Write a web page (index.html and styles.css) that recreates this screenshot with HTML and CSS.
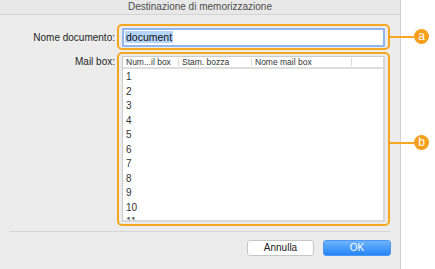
FILE: index.html
```html
<!DOCTYPE html>
<html lang="it">
<head>
<meta charset="utf-8">
<title>Destinazione di memorizzazione</title>
<link rel="stylesheet" href="styles.css">
</head>
<body>
<div class="stage">
  <div class="dialog">
    <div class="titlebar">Destinazione di memorizzazione</div>
    <div class="form">
      <div class="label label-name">Nome documento:</div>
      <div class="hl hl-name">
        <div class="field"><span class="sel">document</span></div>
      </div>
      <div class="label label-mail">Mail box:</div>
      <div class="hl hl-mail">
        <div class="table">
          <div class="thead">
            <div class="th">Num...il box</div>
            <div class="th">Stam. bozza</div>
            <div class="th">Nome mail box</div>
            <div class="th th-last"></div>
          </div>
          <div class="tbody">
            <div class="tr">1</div>
            <div class="tr">2</div>
            <div class="tr">3</div>
            <div class="tr">4</div>
            <div class="tr">5</div>
            <div class="tr">6</div>
            <div class="tr">7</div>
            <div class="tr">8</div>
            <div class="tr">9</div>
            <div class="tr">10</div>
            <div class="tr">11</div>
          </div>
        </div>
      </div>
    </div>
    <div class="sep"></div>
    <div class="buttons">
      <div class="btn btn-cancel">Annulla</div>
      <div class="btn btn-ok">OK</div>
    </div>
  </div>
  <div class="callout-line line-a"></div>
  <div class="badge badge-a">a</div>
  <div class="callout-line line-b"></div>
  <div class="badge badge-b">b</div>
</div>
</body>
</html>
```
FILE: styles.css
```css
html, body {
  margin: 0;
  padding: 0;
  background: #ffffff;
}
.stage {
  position: relative;
  width: 435px;
  height: 269px;
  overflow: hidden;
  font-family: "Liberation Sans", Arial, sans-serif;
  color: #262626;
}
.dialog {
  width: 401px;
  height: 269px;
  box-sizing: border-box;
  background: #ececec;
  border-right: 1px solid #d2d2d2;
  display: flex;
  flex-direction: column;
}
.titlebar {
  height: 15px;
  box-sizing: border-box;
  line-height: 14px;
  text-align: center;
  font-size: 10px;
  color: #4d4d4d;
  background: #e8e8e8;
  border-bottom: 1px solid #d4d4d4;
}
.form {
  display: grid;
  grid-template-columns: 117px 273px;
  row-gap: 2px;
  margin-top: 9px;
}
.label {
  font-size: 10px;
  text-align: right;
  padding-right: 2px;
  color: #262626;
}
.label-name {
  align-self: center;
}
.label-mail {
  padding-top: 4px;
}
.hl {
  border: 2px solid #f5a623;
  border-radius: 5px;
  box-sizing: border-box;
}
.hl-name {
  height: 26px;
  padding: 2px 3px 1px 3px;
}
.hl-mail {
  height: 174px;
  padding: 2px 3px;
}
.field {
  height: 19px;
  box-sizing: border-box;
  border: 2px solid #8fb6ee;
  border-radius: 1px;
  background: #ffffff;
  padding-left: 1px;
  font-size: 10.5px;
  line-height: 15px;
}
.sel {
  background: #b4d5fe;
  color: #111111;
  padding: 0 1px;
}
.table {
  height: 166px;
  box-sizing: border-box;
  background: #ffffff;
  border: 1px solid #cbcbcb;
  border-right: 2px solid #d9d9d9;
  border-bottom: 2px solid #d9d9d9;
  overflow: hidden;
}
.thead {
  display: grid;
  grid-template-columns: 56px 73px 100px 1fr;
  height: 12px;
  box-sizing: border-box;
  border-bottom: 2px solid #dedede;
  font-size: 8.5px;
  line-height: 10px;
  color: #333333;
}
.th {
  padding-left: 3px;
  border-right: 1px solid #dadada;
  margin: 1px 0;
  line-height: 8px;
  white-space: nowrap;
  overflow: hidden;
}
.th-last {
  border-right: none;
}
.tbody {
  padding-top: 1px;
}
.tr {
  height: 14.5px;
  line-height: 14.5px;
  font-size: 10px;
  padding-left: 3px;
  color: #333333;
}
.sep {
  margin: 5px 0 0 9px;
  width: 381px;
  height: 1px;
  background: #d6d6d6;
}
.buttons {
  display: flex;
  justify-content: flex-end;
  gap: 9px;
  margin-top: 8px;
  padding-right: 9px;
}
.btn {
  width: 67px;
  height: 16px;
  box-sizing: border-box;
  border-radius: 3px;
  font-size: 10px;
  line-height: 14px;
  text-align: center;
}
.btn-cancel {
  background: #ffffff;
  border: 1px solid #c6c6c6;
  color: #222222;
}
.btn-ok {
  width: 68px;
  background: linear-gradient(#6fb4fb, #2585f9);
  border: 1px solid #4c97f2;
  color: #ffffff;
}
.callout-line {
  position: absolute;
  height: 2px;
  background: #f5a623;
}
.line-a {
  left: 390px;
  top: 36px;
  width: 26px;
}
.line-b {
  left: 390px;
  top: 142px;
  width: 26px;
}
.badge {
  position: absolute;
  width: 15px;
  height: 15px;
  border-radius: 50%;
  background: #f5a01a;
  color: #ffffff;
  font-size: 12px;
  line-height: 14px;
  text-align: center;
}
.badge-a {
  left: 414px;
  top: 29px;
}
.badge-b {
  left: 414px;
  top: 135px;
}
```
